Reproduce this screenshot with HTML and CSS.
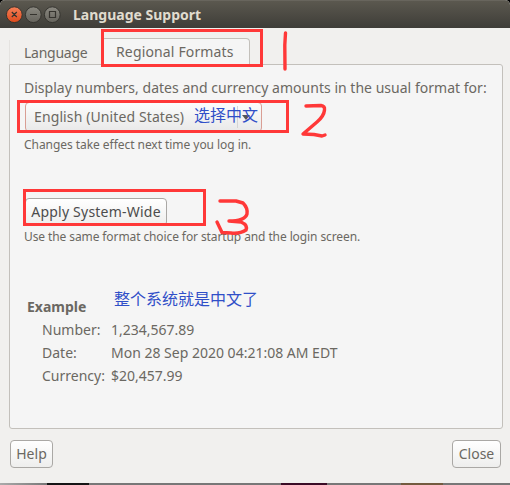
FILE: index.html
```
<!DOCTYPE html>
<html lang="en">
<head>
<meta charset="utf-8">
<title>Language Support</title>
<link rel="stylesheet" href="styles.css">
</head>
<body>
<div class="window">
  <header class="titlebar">
    <svg class="controls" width="56" height="18" viewBox="0 0 56 18">
      <defs>
        <linearGradient id="orange" x2="0" y2="1"><stop stop-color="#f58058"/><stop offset="1" stop-color="#df4a1b"/></linearGradient>
        <linearGradient id="gray" x2="0" y2="1"><stop stop-color="#8b8981"/><stop offset="1" stop-color="#65635c"/></linearGradient>
      </defs>
      <g stroke="#35342f">
        <circle cx="9.300" cy="8.700" r="7.900" fill="url(#orange)"/>
        <circle cx="28.300" cy="8.700" r="7.900" fill="url(#gray)"/>
        <circle cx="47.300" cy="8.700" r="7.900" fill="url(#gray)"/>
      </g>
      <g fill="none" stroke="#35332e" stroke-width="1.2">
        <path d="M6.800 6l5 5M11.800 6l-5 5M25 8.500h7M44.500 5.500h6v6h-6z"/>
      </g>
    </svg>
    <h1 class="title">Language Support</h1>
  </header>
  <nav class="tabs">
    <span class="tab tab-language"><span class="t-language">Language</span></span>
    <span class="tab tab-active"><span class="t-regional">Regional Formats</span></span>
  </nav>
  <main class="panel">
    <p class="line t-display">Display numbers, dates and currency amounts in the usual format for:</p>
    <div class="combo">
      <span class="t-english">English (United States)</span>
      <span class="arrow"><svg width="8" height="5" viewBox="0 0 8 5"><path d="M0 0h8L4 5z" fill="#555"/></svg></span>
    </div>
    <p class="hint t-changes">Changes take effect next time you log in.</p>
    <button class="button apply"><span class="t-apply">Apply System-Wide</span></button>
    <p class="hint t-use">Use the same format choice for startup and the login screen.</p>
    <h2 class="example t-example">Example</h2>
    <dl class="values">
      <dt>Number:</dt><dd>1,234,567.89</dd>
      <dt>Date:</dt><dd>Mon 28 Sep 2020 04:21:08 AM EDT</dd>
      <dt>Currency:</dt><dd>$20,457.99</dd>
    </dl>
  </main>
  <footer class="actions">
    <button class="button help">Help</button>
    <button class="button close">Close</button>
  </footer>
  <div class="desktop"></div>
  <span class="note note-choose">选择中文</span>
  <span class="note note-system">整个系统就是中文了</span>
  <svg class="marks" width="510" height="485" viewBox="0 0 510 485">
    <g fill="none" stroke="#ff3838" stroke-width="3">
      <path d="M102.500 30.500h159v35h-159zM18.500 101.500h269v30h-269zM24.500 190.500h180v34h-180z"/>
      <g stroke-width="3.400" stroke-linecap="round" stroke-linejoin="round">
        <path d="M285.500 33L284.800 45L285 69"/>
        <path d="M306 106L321 105.500Q325 106 324.500 110Q324 116 317 122L303 134L314 134.500L322 136L325 135"/>
        <path d="M220 201L236 201L243 203Q248 208 247 214Q245 221 229 221L241 222Q248 225 246 230Q240 234 231 233L222 232.500L217 222"/>
      </g>
    </g>
  </svg>
</div>
</body>
</html>
```
FILE: styles.css
```
* { box-sizing: border-box; }
body, h1, h2, p, dl, dd { margin: 0; }
body { background: #000; }
.window {
  position: relative;
  width: 510px;
  height: 485px;
  overflow: hidden;
  display: flex;
  flex-direction: column;
  background: #f1f0ee;
  border-radius: 5px 5px 0 0;
  color: #6b6862;
  font: 14px/20px "Noto Sans", "Noto Sans CJK SC", sans-serif;
}
.titlebar {
  flex: none;
  height: 28px;
  display: flex;
  align-items: flex-start;
  padding: 5px 0 0 5px;
  background: linear-gradient(#5b584f, #3e3d38);
  border-top: 1px solid #68655d;
}
.controls { display: block; flex: none; }
.title {
  margin: -1px 0 0 12px;
  color: #e0dccf;
  font-size: 14px;
  line-height: 20px;
  white-space: nowrap;
}
.tabs { flex: none; height: 36px; display: flex; align-items: flex-end; padding-left: 9px; }
.tab { white-space: nowrap; }
.tab-language { width: 92px; height: 24px; padding: 3px 0 0 14px; border-left: 1px solid #e5e3e0; }
.tab-active {
  width: 149px;
  height: 27px;
  margin-bottom: -1px;
  padding: 3px 0 0 14px;
  background: #f5f5f5;
  border: 1px solid #c3c0bb;
  border-bottom: 0;
  border-radius: 4px 4px 0 0;
  position: relative;
}
.t-language { letter-spacing: -0.25px; }
.t-regional { letter-spacing: 0.15px; }
.t-display { letter-spacing: 0.02px; }
.t-english { letter-spacing: 0.11px; }
.t-apply { letter-spacing: 0.22px; }
.t-changes { letter-spacing: -0.05px; }
.t-use { letter-spacing: -0.1px; }
.panel {
  flex: none;
  width: 494px;
  height: 365px;
  margin-left: 9px;
  padding: 13px 0 0 14px;
  background: #f5f5f5;
  border: 1px solid #c3c0bb;
  border-radius: 0 3px 3px 3px;
}
.line, .hint { white-space: nowrap; }
.hint { font-size: 12px; line-height: 16px; }
.combo {
  width: 237px;
  height: 30px;
  margin: 4px 0 5px 1px;
  padding-left: 8px;
  display: flex;
  align-items: center;
  justify-content: space-between;
  background: linear-gradient(#fcfcfc, #e9e9e9);
  border: 1px solid #d99e94;
  border-radius: 4px;
  white-space: nowrap;
}
.arrow { width: 24px; height: 22px; display: flex; align-items: center; padding-left: 4px; border-left: 1px solid #d5d5d5; }
.button {
  display: flex;
  align-items: center;
  justify-content: center;
  height: 28px;
  padding: 0;
  border: 1px solid #aaa8a5;
  border-radius: 4px;
  background: linear-gradient(#fff, #eeeeed);
  color: inherit;
  font: inherit;
  white-space: nowrap;
}
.apply { width: 142px; margin: 45px 0 3px 1px; color: #4c4c4c; }
.example { margin: 52px 0 0 3px; font-size: 14px; line-height: 20px; }
.values { display: grid; grid-template-columns: 69px 300px; grid-auto-rows: 23px; margin: 1px 0 0 18px; line-height: 23px; white-space: nowrap; }
.actions { flex: none; height: 54px; display: flex; justify-content: space-between; padding: 11px 9px 0 10px; }
.help { width: 43px; }
.close { width: 49px; }
.desktop {
  height: 2px;
  background: linear-gradient(90deg, #aaa, #777 47px, #151515 47px 89px, #777 89px 281px, #3a0c26 281px 327px, #777 327px 401px, #735b3f 401px 443px, #777 443px);
}
.note { position: absolute; color: #304fc8; font: 16px/20px "Noto Sans CJK SC", sans-serif; white-space: nowrap; }
.note-choose { left: 194px; top: 104px; }
.note-system { left: 114px; top: 288px; }
.marks { position: absolute; left: 0; top: 0; }
```
